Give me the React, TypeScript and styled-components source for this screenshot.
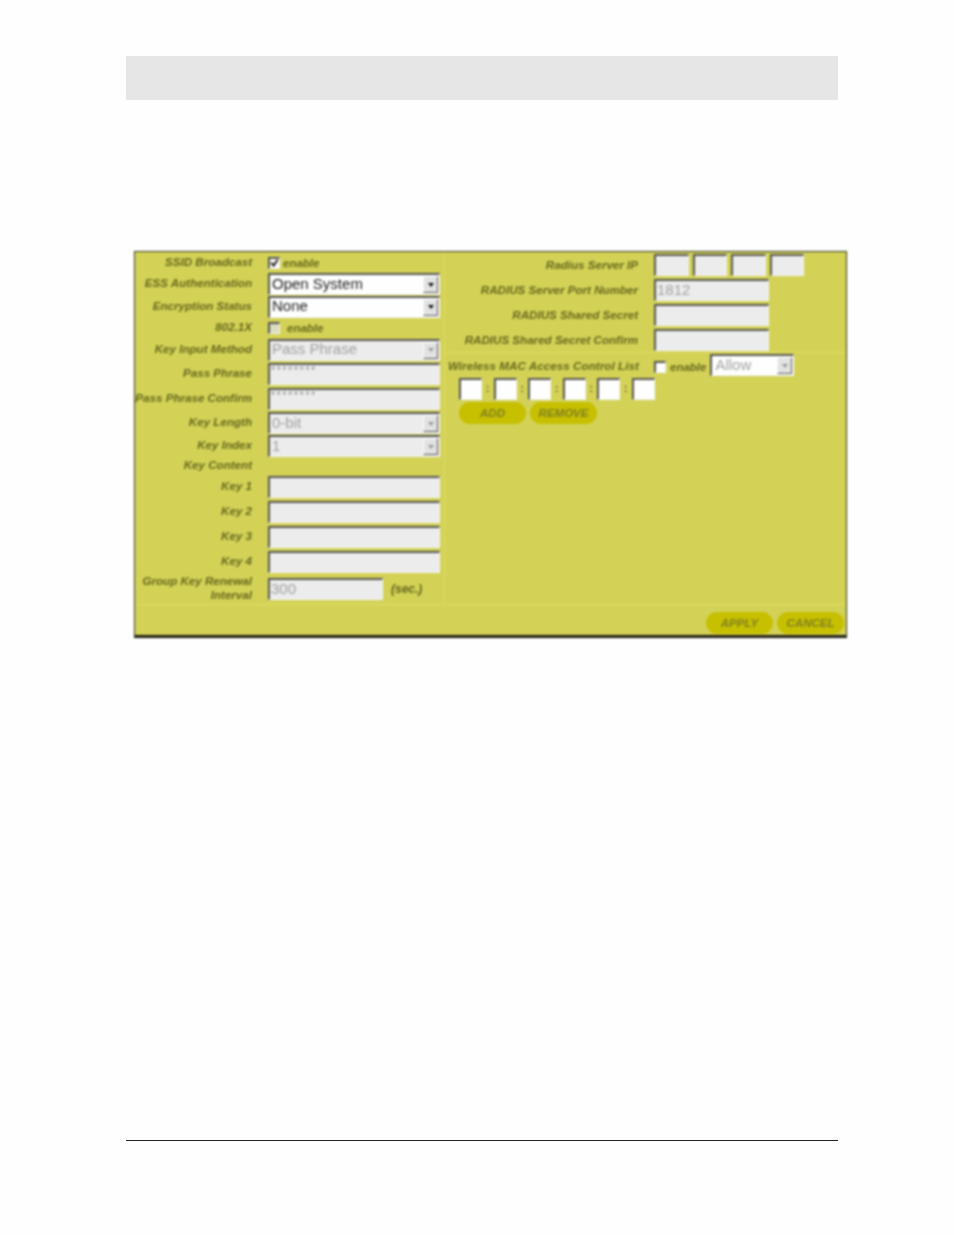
import React from 'react'
import styled, { createGlobalStyle, css } from 'styled-components'

const GlobalStyle = createGlobalStyle`
  html, body { margin: 0; padding: 0; background: #fefefe; }
  body { font-family: "Liberation Sans", Arial, sans-serif; }
`

const Page = styled.div`
  width: 954px;
  height: 1235px;
  padding: 56px 0 0 126px;
  box-sizing: border-box;
  overflow: hidden;
`

const HeaderBand = styled.div`
  width: 712px;
  height: 44px;
  background: #e6e6e7;
`

const Panel = styled.div`
  width: 713px;
  height: 387px;
  margin: 151px 0 0 8px;
  box-sizing: border-box;
  background: #d3d257;
  border: 1px solid #33331a;
  border-bottom: 3px solid #1f1f10;
  display: grid;
  grid-template-columns: 310px 1fr;
  grid-template-rows: 352px 1fr;
  filter: blur(0.85px);
`

const FooterRule = styled.div`
  width: 712px;
  height: 1px;
  margin-top: 502px;
  background: #222;
`

const LeftCol = styled.div`
  border-right: 1px solid #dcdb62;
  display: flex;
  flex-direction: column;
`

const RightCol = styled.div`
  display: flex;
  flex-direction: column;
`

const Bottom = styled.div`
  grid-column: 1 / 3;
  border-top: 1px solid #dedd60;
  display: flex;
  justify-content: flex-end;
  align-items: flex-start;
  gap: 4px;
  padding: 7px 2px 0 0;
`

const Row = styled.div<{ $h: number }>`
  height: ${p => p.$h}px;
  display: flex;
  align-items: center;
`

const Label = styled.div<{ $w?: number; $up?: number; $down?: number; $wide?: boolean }>`
  width: ${p => p.$w ?? 117}px;
  flex: none;
  display: flex;
  justify-content: flex-end;
  text-align: right;
  padding: ${p => p.$down ?? 0}px 0 ${p => p.$up ?? 0}px;
  font: italic bold 11.6px/14px "Liberation Sans", Arial, sans-serif;
  letter-spacing: ${p => (p.$wide ? '0.07px' : 'normal')};
  color: #66661c;
  white-space: nowrap;
`

const ControlCell = styled.div<{ $ml?: number }>`
  margin-left: ${p => p.$ml ?? 16}px;
  display: flex;
  align-items: center;
`

const fieldBorder = css`
  box-sizing: border-box;
  border-style: solid;
  border-width: 2px 1px 1px 2px;
  border-color: #555 #f4f4f4 #f4f4f4 #555;
`

const TextField = styled.input<{ $w?: number; $white?: boolean; $small?: boolean }>`
  ${fieldBorder}
  display: block;
  width: ${p => p.$w ?? 172}px;
  height: 22px;
  padding: 0 1px 2px;
  margin: 0;
  outline: none;
  background: ${p => (p.$white ? '#fefefe' : '#ececec')};
  color: #a0a0a0;
  font: ${p => (p.$small ? '10px/14px' : '15px/18px')} "Liberation Sans", Arial, sans-serif;
  ${p => p.$small && css`
    padding-bottom: 7px;
    letter-spacing: 1.85px;
    color: #8a8a8a;
  `}
`

const SelectBox = styled.div<{ $w?: number; $off?: boolean; $white?: boolean; $ml?: number; $pl?: number }>`
  ${fieldBorder}
  width: ${p => p.$w ?? 172}px;
  height: 22px;
  margin-left: ${p => p.$ml ?? 0}px;
  display: flex;
  align-items: center;
  justify-content: space-between;
  padding: 0 1px 0 ${p => p.$pl ?? 2}px;
  background: ${p => (p.$off && !p.$white ? '#ececec' : '#fefefe')};
  color: ${p => (p.$off ? '#a0a0a0' : '#1c1c1c')};
  font: 15px/18px "Liberation Sans", Arial, sans-serif;
`

const SelectText = styled.span`
  padding-bottom: 2px;
`

const Arrow = styled.span<{ $off?: boolean }>`
  width: 15px;
  height: 17px;
  flex: none;
  display: flex;
  align-items: center;
  justify-content: center;
  box-sizing: border-box;
  background: #e2e2e2;
  border: 1px solid;
  border-color: #fafafa #555 #555 #fafafa;
  &::after {
    content: '';
    border-style: solid;
    border-width: 4px 3.5px 0;
    border-color: ${p => (p.$off ? '#999' : '#111')} transparent transparent;
  }
`

const Check = styled.span<{ $off?: boolean; $mr: number; $mt?: number }>`
  ${fieldBorder}
  width: 12px;
  height: 12px;
  flex: none;
  margin: ${p => p.$mt ?? 0}px ${p => p.$mr}px 0 0;
  background: ${p => (p.$off ? '#dcdcc0' : '#fefefe')};
  color: #111;
  display: flex;
  align-items: center;
  justify-content: center;
`

const CheckNote = styled.span<{ $mt?: number }>`
  margin-top: ${p => p.$mt ?? 0}px;
  font: italic bold 11.5px/14px "Liberation Sans", Arial, sans-serif;
  color: #66661c;
`

const Unit = styled(CheckNote)`
  margin-left: 8px;
  font-size: 12px;
`

const Sep = styled.span`
  width: 11.5px;
  flex: none;
  text-align: center;
  color: #55551a;
  font: bold 10px/12px "Liberation Sans", Arial, sans-serif;
`

const IpRow = styled.div`
  display: flex;
  gap: 4px;
  margin-left: 16px;
`

const MacRow = styled.div`
  display: flex;
  align-items: center;
  margin: 1px 0 0 14px;
  height: 22px;
`

const ButtonRow = styled.div`
  display: flex;
  gap: 4px;
  margin: 2px 0 0 14px;
`

const Pill = styled.button<{ $w: number }>`
  width: ${p => p.$w}px;
  height: 22px;
  border: 0;
  padding: 0;
  border-radius: 11px;
  background: #c6c000;
  color: #7f7e22;
  font: italic bold 11.5px/22px "Liberation Sans", Arial, sans-serif;
`

const Divider = styled.div`
  height: 1px;
  background: #dedd60;
`

const Tick = () => (
  <svg width="10" height="10" viewBox="0 0 10 10">
    <path d="M1.5 4.5 L4 8 L8.5 1.5" fill="none" stroke="#111" strokeWidth="2" />
  </svg>
)

const field = (value = '', w?: number) => <TextField readOnly value={value} $w={w} />

const select = (text: string, off?: boolean) => (
  <SelectBox $off={off}><SelectText>{text}</SelectText><Arrow $off={off} /></SelectBox>
)

const leftRows: [string, number, React.ReactNode][] = [
  ['SSID Broadcast', 21, <><Check $mr={3}><Tick /></Check><CheckNote>enable</CheckNote></>],
  ['ESS Authentication', 22, select('Open System')],
  ['Encryption Status', 23, select('None')],
  ['802.1X', 20, <><Check $off $mr={7} /><CheckNote>enable</CheckNote></>],
  ['Key Input Method', 23, select('Pass Phrase', true)],
  ['Pass Phrase', 25, <TextField readOnly value="********" $small />],
  ['Pass Phrase Confirm', 25, <TextField readOnly value="********" $small />],
  ['Key Length', 24, select('0-bit', true)],
  ['Key Index', 22, select('1', true)],
  ['Key Content', 17, null],
  ['Key 1', 25, field()],
  ['Key 2', 25, field()],
  ['Key 3', 25, field()],
  ['Key 4', 25, field()],
]

const macFields = [23, 23, 23, 23, 23, 23]

export default function App() {
  return (
    <Page>
      <GlobalStyle />
      <HeaderBand />
      <Panel>
        <LeftCol>
          {leftRows.map(([label, h, control]) => (
            <Row key={label} $h={h}>
              <Label $up={2}>{label}</Label>
              <ControlCell>{control}</ControlCell>
            </Row>
          ))}
          <Row $h={30}>
            <Label $up={2}>Group Key Renewal<br />Interval</Label>
            <ControlCell>
              <TextField readOnly value="300" $w={115} />
              <Unit>(sec.)</Unit>
            </ControlCell>
          </Row>
        </LeftCol>
        <RightCol>
          <Row $h={25}>
            <Label $w={193}>Radius Server IP</Label>
            <IpRow>
              {[1, 2, 3, 4].map(i => <React.Fragment key={i}>{field('', 34.5)}</React.Fragment>)}
            </IpRow>
          </Row>
          <Row $h={25}>
            <Label $w={193}>RADIUS Server Port Number</Label>
            <ControlCell>{field('1812', 115)}</ControlCell>
          </Row>
          <Row $h={25}>
            <Label $w={193}>RADIUS Shared Secret</Label>
            <ControlCell>{field('', 115)}</ControlCell>
          </Row>
          <Row $h={25}>
            <Label $w={193}>RADIUS Shared Secret Confirm</Label>
            <ControlCell>{field('', 115)}</ControlCell>
          </Row>
          <Divider />
          <Row $h={24}>
            <Label $w={194} $down={2} $wide>Wireless MAC Access Control List</Label>
            <ControlCell $ml={15}>
              <Check $mr={4} $mt={4} />
              <CheckNote $mt={4}>enable</CheckNote>
              <SelectBox $off $white $w={84} $ml={4} $pl={3}><SelectText>Allow</SelectText><Arrow $off /></SelectBox>
            </ControlCell>
          </Row>
          <MacRow>
            {macFields.map((w, i) => (
              <React.Fragment key={i}>
                {i > 0 && <Sep>:</Sep>}
                <TextField readOnly value="" $w={w} $white />
              </React.Fragment>
            ))}
          </MacRow>
          <ButtonRow>
            <Pill $w={67}>ADD</Pill>
            <Pill $w={67}>REMOVE</Pill>
          </ButtonRow>
        </RightCol>
        <Bottom>
          <Pill $w={67}>APPLY</Pill>
          <Pill $w={67}>CANCEL</Pill>
        </Bottom>
      </Panel>
      <FooterRule />
    </Page>
  )
}
